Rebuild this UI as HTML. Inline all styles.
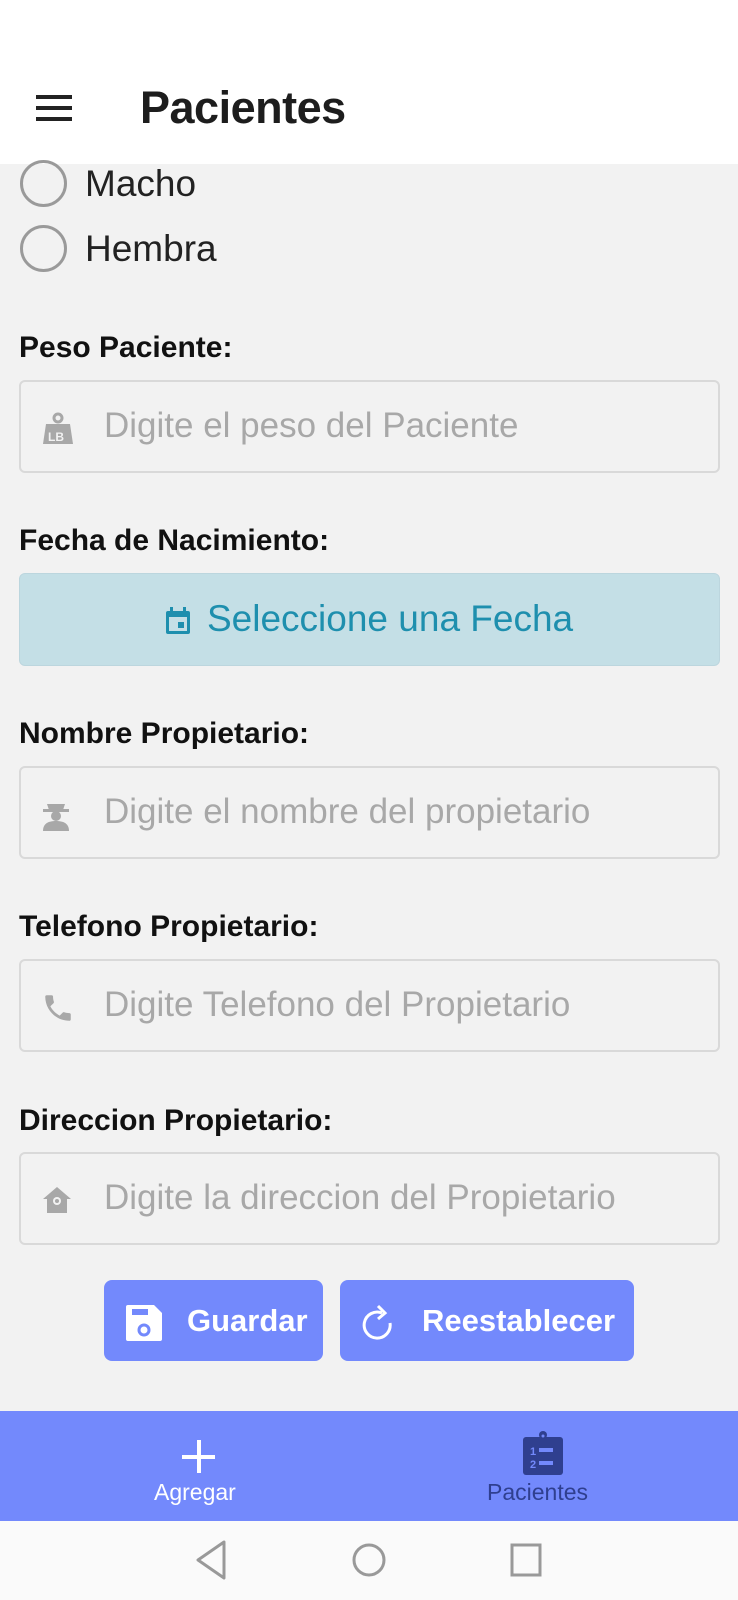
<!DOCTYPE html>
<html><head><meta charset="utf-8"><style>
*{margin:0;padding:0;box-sizing:border-box}
body{width:738px;height:1600px;background:#f2f2f2;font-family:"Liberation Sans",sans-serif;position:relative;overflow:hidden}
.abs{position:absolute}
.hdr{left:0;top:0;width:738px;height:164px;background:#fff}
.title{left:140px;top:82px;font-size:45px;color:#1d1d1d;font-weight:bold;letter-spacing:-0.5px}
.lbl{left:19px;font-size:30px;font-weight:bold;color:#111;letter-spacing:0}
.inp{left:19px;width:701px;height:93px;border:2px solid #d9d9d9;border-radius:6px;background:#f2f2f2}
.ph{position:absolute;left:83px;top:24px;font-size:35px;color:#a8a8a8;letter-spacing:0}
.ic{position:absolute;left:20px;top:30px}
.radio{left:20px;width:47px;height:47px;border:3px solid #9a9a9a;border-radius:50%}
.rt{left:85px;font-size:37px;color:#222}
.btn{height:81px;top:1280px;background:#7389fc;border-radius:8px;color:#fff;font-weight:bold;font-size:31px}
</style></head><body>
<div class="abs hdr"></div>
<div class="abs" style="left:36px;top:95px;width:36px;height:4px;background:#222;box-shadow:0 11px 0 #222,0 22px 0 #222"></div>
<div class="abs title">Pacientes</div>

<div class="abs radio" style="top:160px"></div>
<div class="abs rt" style="top:163px">Macho</div>
<div class="abs radio" style="top:225px"></div>
<div class="abs rt" style="top:228px">Hembra</div>

<div class="abs lbl" style="top:331px">Peso Paciente:</div>
<div class="abs inp" style="top:380px">
<svg class="ic" width="34" height="34" viewBox="0 0 34 34"><circle cx="17" cy="6" r="4" fill="none" stroke="#a8a8a8" stroke-width="3"/><path d="M5 12h24l3 20H2z" fill="#a8a8a8"/><text x="7" y="29" font-size="12" font-weight="bold" fill="#f2f2f2" font-family="Liberation Sans">LB</text></svg>
<div class="ph">Digite el peso del Paciente</div></div>

<div class="abs lbl" style="top:524px">Fecha de Nacimiento:</div>
<div class="abs" style="left:19px;top:573px;width:701px;height:93px;background:#c4dfe6;border-radius:6px;border:1px solid #bcd6de"></div>
<svg class="abs" style="left:165px;top:607px" width="26" height="28" viewBox="0 0 26 28"><rect x="1" y="4" width="24" height="23" rx="2" fill="#1e8fae"/><rect x="5" y="0" width="3" height="6" fill="#1e8fae"/><rect x="18" y="0" width="3" height="6" fill="#1e8fae"/><rect x="4" y="10" width="18" height="14" fill="#c4dfe6"/><rect x="13" y="15" width="6" height="6" fill="#1e8fae"/></svg>
<div class="abs" style="left:207px;top:598px;font-size:37px;color:#1e8fae">Seleccione una Fecha</div>

<div class="abs lbl" style="top:717px">Nombre Propietario:</div>
<div class="abs inp" style="top:766px">
<svg class="ic" width="30" height="34" viewBox="0 0 30 34"><path d="M6 6h18l-2 6H8z" fill="#a8a8a8"/><rect x="2" y="11" width="26" height="3" fill="#a8a8a8"/><circle cx="15" cy="18" r="5" fill="#a8a8a8"/><path d="M2 33c0-8 6-10 13-10s13 2 13 10z" fill="#a8a8a8"/></svg>
<div class="ph">Digite el nombre del propietario</div></div>

<div class="abs lbl" style="top:910px">Telefono Propietario:</div>
<div class="abs inp" style="top:959px">
<svg class="ic" width="34" height="34" viewBox="0 0 24 24"><path fill="#a8a8a8" d="M6.6 10.8c1.4 2.8 3.8 5.1 6.6 6.6l2.2-2.2c.3-.3.7-.4 1-.2 1.1.4 2.3.6 3.6.6.6 0 1 .4 1 1V20c0 .6-.4 1-1 1C10.6 21 3 13.4 3 4c0-.6.4-1 1-1h3.5c.6 0 1 .4 1 1 0 1.3.2 2.5.6 3.6.1.3 0 .7-.2 1z"/></svg>
<div class="ph">Digite Telefono del Propietario</div></div>

<div class="abs lbl" style="top:1104px">Direccion Propietario:</div>
<div class="abs inp" style="top:1152px">
<svg class="ic" width="32" height="32" viewBox="0 0 32 32"><path d="M16 3L2 15h4v14h20V15h4z" fill="#a8a8a8"/><circle cx="16" cy="17" r="4" fill="#f2f2f2"/><circle cx="16" cy="17" r="2" fill="#a8a8a8"/></svg>
<div class="ph">Digite la direccion del Propietario</div></div>

<div class="abs btn" style="left:104px;width:219px">
<svg class="abs" style="left:20px;top:23px" width="40" height="40" viewBox="0 0 40 40"><path d="M4 2h26l8 8v26a2 2 0 0 1-2 2H4a2 2 0 0 1-2-2V4a2 2 0 0 1 2-2z" fill="#fff"/><rect x="8" y="6" width="16" height="6" fill="#7389fc"/><circle cx="20" cy="27" r="5" fill="none" stroke="#7389fc" stroke-width="3"/></svg>
<div class="abs" style="left:83px;top:23px">Guardar</div></div>
<div class="abs btn" style="left:340px;width:294px">
<svg class="abs" style="left:20px;top:23px" width="36" height="40" viewBox="0 0 36 40"><path d="M22 10A13 13 0 1 0 30 20" fill="none" stroke="#fff" stroke-width="3"/><path d="M18 3l7 7-7 6" fill="none" stroke="#fff" stroke-width="3"/></svg>
<div class="abs" style="left:82px;top:23px">Reestablecer</div></div>

<div class="abs" style="left:0;top:1411px;width:738px;height:110px;background:#7389fc"></div>
<div class="abs" style="left:182px;top:1455px;width:33px;height:4px;background:#fff"></div>
<div class="abs" style="left:197px;top:1440px;width:4px;height:33px;background:#fff"></div>
<div class="abs" style="left:154px;top:1479px;font-size:23px;color:#fff">Agregar</div>
<svg class="abs" style="left:523px;top:1431px" width="40" height="44" viewBox="0 0 40 44"><rect x="0" y="6" width="40" height="38" rx="3" fill="#2f3f8f"/><circle cx="20" cy="4" r="4" fill="#2f3f8f"/><circle cx="20" cy="5" r="1.5" fill="#7389fc"/><text x="7" y="24" font-size="11" font-weight="bold" fill="#7389fc" font-family="Liberation Sans">1</text><rect x="16" y="17" width="14" height="4" fill="#7389fc"/><text x="7" y="37" font-size="11" font-weight="bold" fill="#7389fc" font-family="Liberation Sans">2</text><rect x="16" y="30" width="14" height="4" fill="#7389fc"/></svg>
<div class="abs" style="left:487px;top:1479px;font-size:23px;color:#2f3f8f">Pacientes</div>

<div class="abs" style="left:0;top:1521px;width:738px;height:79px;background:#fafafa"></div>
<svg class="abs" style="left:190px;top:1538px" width="360" height="50" viewBox="0 0 360 50"><path d="M34 4L8 22l26 18z" fill="none" stroke="#999" stroke-width="3" stroke-linejoin="round"/><circle cx="179" cy="22" r="15" fill="none" stroke="#999" stroke-width="3"/><rect x="322" y="7" width="28" height="30" fill="none" stroke="#999" stroke-width="3"/></svg>
</body></html>
